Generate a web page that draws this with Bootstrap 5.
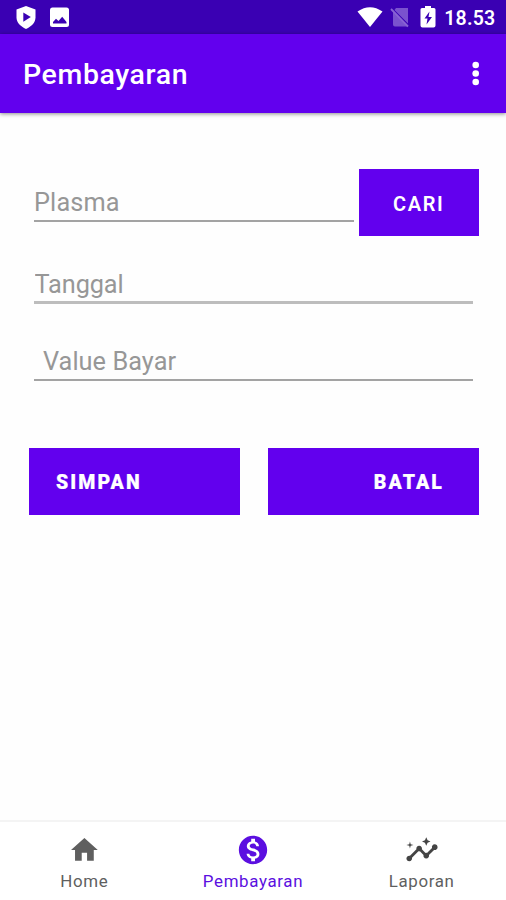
<!DOCTYPE html>
<html lang="id">
<head>
<meta charset="utf-8">
<meta name="viewport" content="width=device-width, initial-scale=1">
<title>Pembayaran</title>
<link href="https://cdn.jsdelivr.net/npm/bootstrap@5.3.0/dist/css/bootstrap.min.css" rel="stylesheet">
<style>
body{font-family:Roboto,sans-serif;background:#fefefe;height:900px;overflow:hidden}
.status{height:34px;background:#3a00b3;padding:0 10.5px 0 12px}
.clock{font-size:19.5px;font-weight:600;letter-spacing:.25px;line-height:34px;padding-top:3px;margin-left:4px}
.topbar{height:79px;background:#6200ee;padding:3px 13px 0 23px;box-shadow:0 1px 4px rgba(0,0,0,.45)}
.title{font-size:28.5px;font-weight:500;letter-spacing:.6px;line-height:1;padding-top:1px}
.fields{padding:56px 27.5px 0 34px}
.field{border:0;border-bottom:2px solid #a3a3a3;border-radius:0;background:transparent;padding:2px 0 0;font-size:25.3px;line-height:36px;height:40px;letter-spacing:.15px}
.field::placeholder{color:#979797;opacity:1}
.first{margin-top:13px}
.wide{width:439px}
.date{margin-top:27px;height:41px;padding-top:4px;padding-left:.5px;letter-spacing:-.1px;border-bottom:3px solid #bdbdbd}
.amount{margin-top:36.5px;padding:4px 0 0 9px;letter-spacing:.05px}
.action{height:67px;border:0;border-radius:0;background:#6200ee;color:#fff;font-size:20px;letter-spacing:1.6px;font-weight:600;padding:3px 0 0}
.action:hover{background:#5600d6;color:#fff}
.search{width:119.5px;margin-left:5.5px}
.actions{padding:67.5px 27.5px 0 28.5px;gap:28px}
.heavy{font-size:19.5px;font-weight:900;letter-spacing:2.1px;-webkit-text-stroke:.2px #fff;padding:3px 34.5px 0 27.5px}
.tabs{height:80px;border-top:2px solid #f4f4f4;color:#5f5f5f}
.tab{color:inherit;font-size:16.9px;letter-spacing:.65px;line-height:20px;padding-top:11px}
.tab span{margin-top:4px}
.tab.active{color:#5b0fe0}
</style>
<script src="https://cdn.jsdelivr.net/npm/bootstrap@5.3.0/dist/js/bootstrap.bundle.min.js"></script>
</head>
<body class="d-flex flex-column">
<div class="status d-flex align-items-center text-white flex-shrink-0">
  <svg width="28" height="28" viewBox="0 0 28 28"><path fill="#fff" d="M14 3l9.500 3.500v8c0 5-4 9-9.500 11.500c-5.500-2.500-9.500-6.500-9.500-11.500v-8z"/><path fill="#3a00b3" d="M11.300 9.500v9.200l7.500-4.600z"/></svg>
  <svg class="ms-1" width="30" height="28" viewBox="0 0 30 28"><rect x="6" y="4.500" width="19" height="19.500" rx="2.500" fill="#fff"/><path fill="#3a00b3" d="M9 20.500v-1.500l3-3.300 2.500 2.300 3.700-4.200 4.300 5.200v1.500z"/></svg>
  <svg class="ms-auto" width="28" height="28" viewBox="0 0 28 28"><path fill="#fff" d="M1.500 8.500Q14 0 26.500 8.500L14 24z"/></svg>
  <svg class="ms-1" width="24" height="28" viewBox="0 0 24 28"><path fill="#7a52ce" d="M8 5h12v15.500L6.500 7zM5 8.500L20 23.500H7q-2 0-2-2z"/><path stroke="#8963d4" stroke-width="1.800" d="M3 6l17 17.500"/></svg>
  <svg class="ms-1" width="24" height="28" viewBox="0 0 24 28"><path fill="#fff" d="M9 3h6v2h3q1.500 0 1.500 1.500v16q0 2-2 2h-11q-2 0-2-2v-16q0-1.500 1.500-1.500h3z"/><path fill="#3a00b3" d="M13.500 8.500l-5 7h3l-1 6 5.500-7.500h-3.500z"/></svg>
  <span class="clock">18.53</span>
</div>
<header class="topbar d-flex align-items-center justify-content-between text-white flex-shrink-0">
  <h1 class="title m-0">Pembayaran</h1>
  <svg width="34" height="34" viewBox="0 0 34 34" fill="#fff"><circle cx="16.700" cy="7" r="3.300"/><circle cx="16.700" cy="15.500" r="3.300"/><circle cx="16.700" cy="24" r="3.300"/></svg>
</header>
<main class="flex-grow-1">
  <form>
    <div class="fields">
      <div class="d-flex">
        <input class="form-control field first" placeholder="Plasma" aria-label="Plasma">
        <button type="button" class="btn action search flex-shrink-0">CARI</button>
      </div>
      <input class="form-control field wide date" placeholder="Tanggal" aria-label="Tanggal">
      <input class="form-control field wide amount" placeholder="Value Bayar" aria-label="Value Bayar">
    </div>
    <div class="actions d-flex">
      <button type="button" class="btn action heavy flex-fill w-50 text-start">SIMPAN</button>
      <button type="button" class="btn action heavy flex-fill w-50 text-end">BATAL</button>
    </div>
  </form>
</main>
<nav class="tabs d-flex bg-white flex-shrink-0">
  <a href="#" class="tab w-100 d-flex flex-column align-items-center text-decoration-none">
    <svg width="34" height="34" viewBox="-1 -.7 25.400 25.400" fill="currentColor"><path d="M10 20v-6h4v6h5v-8h3L12 3 2 12h3v8z"/></svg>
    <span>Home</span>
  </a>
  <a href="#" class="tab active w-100 d-flex flex-column align-items-center text-decoration-none">
    <svg width="34" height="34" viewBox="0 0 24 24" fill="currentColor"><path d="M12 2C6.480 2 2 6.480 2 12s4.480 10 10 10 10-4.480 10-10S17.520 2 12 2zm1.410 16.090V20h-2.670v-1.930c-1.710-.36-3.160-1.460-3.270-3.400h1.960c.1 1.050.82 1.870 2.650 1.870 1.960 0 2.400-.98 2.400-1.590 0-.83-.44-1.610-2.670-2.140-2.480-.6-4.180-1.620-4.180-3.670 0-1.720 1.390-2.840 3.110-3.210V4h2.670v1.950c1.860.45 2.790 1.860 2.850 3.390H14.300c-.05-1.110-.64-1.870-2.220-1.870-1.500 0-2.400.68-2.400 1.640 0 .84.65 1.390 2.670 1.910s4.180 1.390 4.180 3.910c-.01 1.830-1.380 2.830-3.120 3.160z"/></svg>
    <span>Pembayaran</span>
  </a>
  <a href="#" class="tab w-100 d-flex flex-column align-items-center text-decoration-none">
    <svg width="34" height="34" viewBox="0 0 24 24" fill="#444"><path d="M21 8c-1.450 0-2.260 1.440-1.930 2.510l-3.550 3.560c-.3-.09-.74-.09-1.040 0l-2.550-2.550C12.270 10.450 11.460 9 10 9c-1.450 0-2.270 1.440-1.930 2.520l-4.560 4.550C2.440 15.740 1 16.550 1 18c0 1.100.9 2 2 2 1.450 0 2.260-1.440 1.930-2.510l4.550-4.560c.3.09.74.09 1.040 0l2.550 2.550C12.730 16.550 13.540 18 15 18c1.450 0 2.270-1.440 1.930-2.520l3.560-3.550C21.560 12.260 23 11.450 23 10c0-1.100-.9-2-2-2z"/><path d="M15 9l.94-2.070L18 6l-2.060-.93L15 3l-.92 2.070L12 6l2.080.93zM3.500 11L4 9l2-.5L4 8l-.5-2L3 8l-2 .5L3 9z"/></svg>
    <span>Laporan</span>
  </a>
</nav>
</body>
</html>
